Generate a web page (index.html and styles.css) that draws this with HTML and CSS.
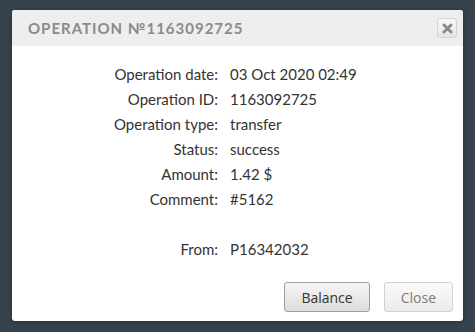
FILE: index.html
```html
<!DOCTYPE html>
<html lang="en">
<head>
    <meta charset="UTF-8">
    <meta name="viewport" content="width=device-width, initial-scale=1.0">
    <title>Operation details</title>
    <link rel="stylesheet" href="styles.css">
</head>
<body>
    <div class="dialog">
        <div class="dialog-header">
            <h2>Operation №1163092725</h2>
            <button class="dialog-close" title="Close">
                <svg width="11" height="11" viewBox="0 0 11 11">
                    <path d="M2 2 L9 9 M9 2 L2 9" stroke="#8a8a8a" stroke-width="3" stroke-linecap="round"/>
                </svg>
            </button>
        </div>

        <div class="dialog-body">
            <span class="label">Operation date:</span><span class="value">03 Oct 2020 02:49</span>
            <span class="label">Operation ID:</span><span class="value">1163092725</span>
            <span class="label">Operation type:</span><span class="value">transfer</span>
            <span class="label">Status:</span><span class="value">success</span>
            <span class="label">Amount:</span><span class="value">1.42 $</span>
            <span class="label">Comment:</span><span class="value">#5162</span>
            <span class="label"></span><span class="value"></span>
            <span class="label">From:</span><span class="value">P16342032</span>
        </div>

        <div class="dialog-footer">
            <button class="btn">Balance</button>
            <button class="btn btn-light">Close</button>
        </div>
    </div>
</body>
</html>
```

FILE: styles.css
```css
/* General Reset */
* {
    margin: 0;
    padding: 0;
    box-sizing: border-box;
}

body {
    font-family: 'Lato', Arial, sans-serif;
    background-color: #36434c;
    padding: 10px 12px;
}

.dialog {
    width: 451px;
    background-color: white;
    border-radius: 3px;
    box-shadow: 0 1px 4px rgba(0, 0, 0, 0.3);
    overflow: hidden;
}

.dialog-header {
    display: flex;
    justify-content: space-between;
    align-items: center;
    height: 36px;
    padding: 0 6px 0 16px;
    background-color: #eeeeee;
}

.dialog-header h2 {
    font-size: 15px;
    font-weight: bold;
    text-transform: uppercase;
    letter-spacing: 1px;
    color: #8a8a8a;
}

.dialog-close {
    display: flex;
    align-items: center;
    justify-content: center;
    width: 20px;
    height: 20px;
    border: 1px solid #d4d4d4;
    border-radius: 3px;
    background: linear-gradient(#f8f8f8, #e6e6e6);
    cursor: pointer;
}

.dialog-body {
    display: grid;
    grid-template-columns: 206px 1fr;
    column-gap: 12px;
    grid-auto-rows: 25px;
    align-items: center;
    padding-top: 15px;
    font-size: 15px;
    color: #333;
}

.dialog-body .label {
    text-align: right;
}

.dialog-footer {
    display: flex;
    justify-content: flex-end;
    gap: 14px;
    padding: 21px 10px 9px;
}

.btn {
    height: 30px;
    padding: 0 16px;
    font-family: 'Open Sans', Arial, sans-serif;
    font-size: 14px;
    color: #333;
    background: linear-gradient(#f6f6f6, #dcdcdc);
    border: 1px solid #9e9e9e;
    border-radius: 3px;
    cursor: pointer;
}

.btn-light {
    color: #7c7c7c;
    background: linear-gradient(#fafafa, #ebebeb);
    border-color: #d2d2d2;
}
```
